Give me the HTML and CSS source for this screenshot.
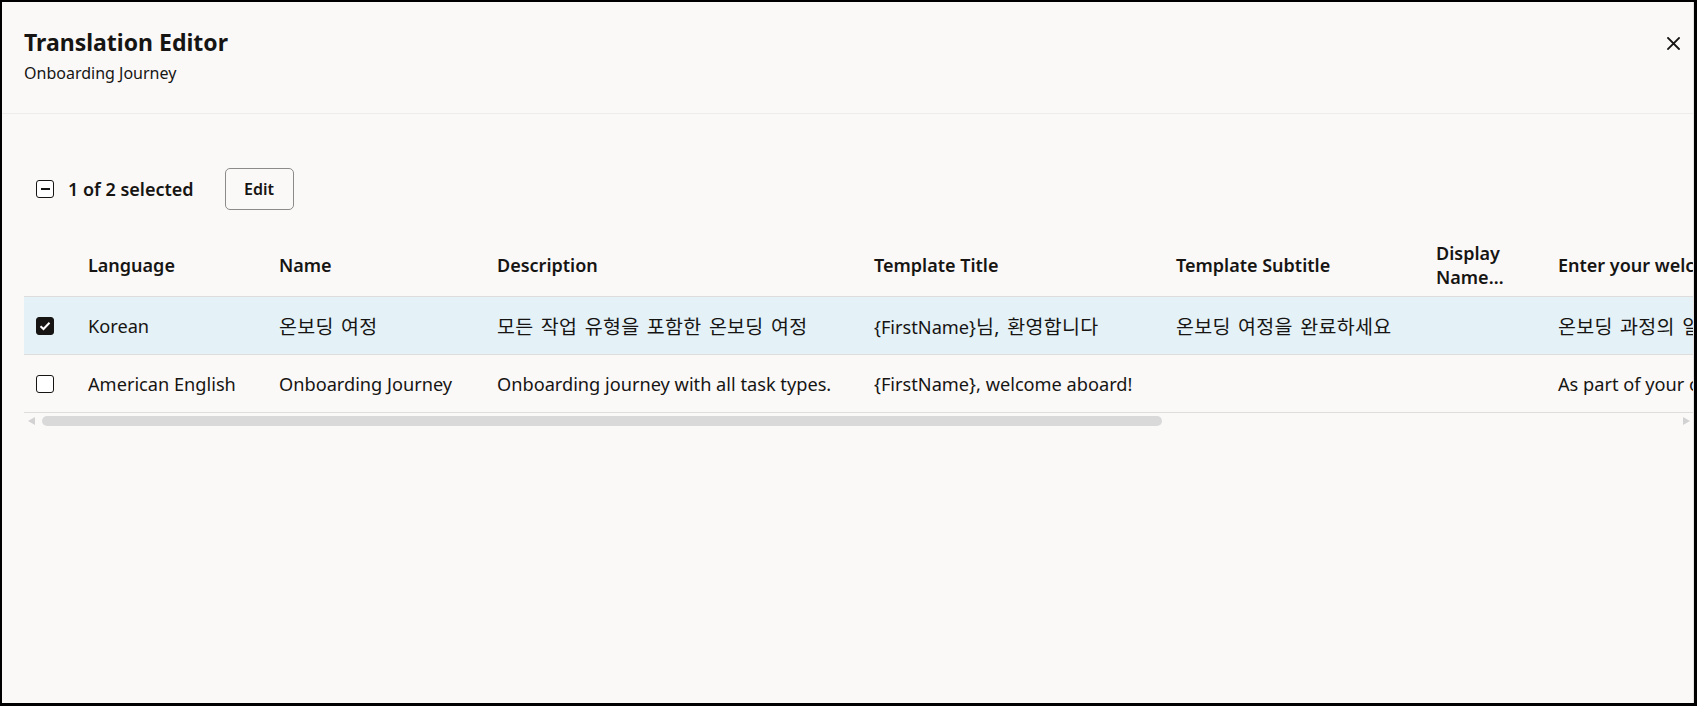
FILE: index.html
```html
<!DOCTYPE html>
<html lang="en">
<head>
  <meta charset="UTF-8">
  <meta name="viewport" content="width=device-width, initial-scale=1.0">
  <title>Translation Editor</title>
  <link rel="stylesheet" href="styles.css">
</head>
<body>
  <div class="frame">
    <div class="dialog">
      <div class="dialog-header">
        <div>
          <h1 class="dialog-title">Translation Editor</h1>
          <div class="dialog-subtitle">Onboarding Journey</div>
        </div>
        <button class="close-btn" aria-label="Close">
          <svg width="13" height="13" viewBox="0 0 13 13">
            <path d="M1 1 L12 12 M12 1 L1 12" stroke="#161513" stroke-width="1.8" stroke-linecap="square"/>
          </svg>
        </button>
      </div>

      <div class="dialog-body">
        <div class="toolbar">
          <span class="checkbox partial"><span class="dash"></span></span>
          <span class="selected-count">1 of 2 selected</span>
          <button class="btn">Edit</button>
        </div>

        <div class="table-wrap">
          <div class="row head">
            <div class="cell"></div>
            <div class="cell">Language</div>
            <div class="cell">Name</div>
            <div class="cell">Description</div>
            <div class="cell">Template Title</div>
            <div class="cell">Template Subtitle</div>
            <div class="cell"><span class="clamp">Display Name Override</span></div>
            <div class="cell">Enter your welcome message</div>
          </div>
          <div class="row selected">
            <div class="cell check">
              <span class="checkbox checked">
                <svg width="12" height="10" viewBox="0 0 12 10">
                  <path d="M1.5 5.2 L4.5 8 L10.5 1.8" fill="none" stroke="#fff" stroke-width="2"/>
                </svg>
              </span>
            </div>
            <div class="cell">Korean</div>
            <div class="cell ko">온보딩 여정</div>
            <div class="cell ko">모든 작업 유형을 포함한 온보딩 여정</div>
            <div class="cell">{FirstName}<span class="ko">님, 환영합니다</span></div>
            <div class="cell ko">온보딩 여정을 완료하세요</div>
            <div class="cell"></div>
            <div class="cell ko">온보딩 과정의 일환으로 다음 작업을 완료해 주세요.</div>
          </div>
          <div class="row">
            <div class="cell check"><span class="checkbox"></span></div>
            <div class="cell">American English</div>
            <div class="cell">Onboarding Journey</div>
            <div class="cell">Onboarding journey with all task types.</div>
            <div class="cell">{FirstName}, welcome aboard!</div>
            <div class="cell"></div>
            <div class="cell"></div>
            <div class="cell">As part of your onboarding, please complete the following tasks.</div>
          </div>
        </div>

        <div class="hscroll">
          <span class="arrow left"></span>
          <span class="thumb"></span>
          <span class="arrow right"></span>
        </div>
      </div>
    </div>
  </div>
</body>
</html>
```

FILE: styles.css
```css
body {
  margin: 0;
  background: #000;
  font-family: "Noto Sans", "Noto Sans CJK KR", sans-serif;
  color: #161513;
}
.frame {
  height: 706px;
  box-sizing: border-box;
  border-style: solid;
  border-color: #000;
  border-width: 2px 3px 3px 2px;
}
.dialog {
  height: 100%;
  background: #fbf9f8;
  border-right: 1px solid #e4e2e0;
  overflow: hidden;
}

/* header */
.dialog-header {
  display: flex;
  justify-content: space-between;
  align-items: flex-start;
  height: 112px;
  box-sizing: border-box;
  padding: 24px 13px 0 22px;
  border-bottom: 1px solid #eeecea;
}
.dialog-title {
  margin: 0;
  font-size: 23px;
  line-height: 32px;
  font-weight: 700;
}
.dialog-subtitle {
  margin-top: 5px;
  font-size: 16px;
  line-height: 20px;
}
.close-btn {
  margin-top: 11px;
  padding: 0;
  border: 0;
  background: none;
  width: 13px;
  height: 13px;
  display: flex;
}

/* body */
.dialog-body {
  padding: 54px 0 0 22px;
}
.toolbar {
  display: flex;
  align-items: center;
  height: 42px;
  padding-left: 12px;
}
.selected-count {
  margin-left: 14px;
  font-size: 18px;
  font-weight: 600;
}
.btn {
  margin-left: 31px;
  width: 69px;
  height: 42px;
  border: 1px solid #8d8b89;
  border-radius: 5px;
  background: transparent;
  font-family: inherit;
  font-size: 16px;
  font-weight: 600;
  color: #161513;
}

.checkbox {
  width: 18px;
  height: 18px;
  box-sizing: border-box;
  border: 1.5px solid #161513;
  border-radius: 3px;
  background: #fff;
  display: inline-flex;
  align-items: center;
  justify-content: center;
}
.checkbox.checked {
  background: #161513;
}
.checkbox .dash {
  width: 9px;
  height: 2px;
  background: #161513;
}

/* table */
.table-wrap {
  margin-top: 31px;
  overflow: hidden;
}
.row {
  display: grid;
  grid-template-columns: 52px 191px 218px 377px 302px 260px 122px 460px;
  align-items: center;
  height: 58px;
  box-sizing: border-box;
  border-bottom: 1px solid #dfdddb;
  font-size: 18.2px;
  width: 1982px;
}
.row.head {
  height: 56px;
  padding-bottom: 7px;
  font-size: 18px;
  font-weight: 600;
  line-height: 24px;
}
.row.selected {
  background: #e4f1f7;
}
.cell {
  padding: 0 12px;
  white-space: nowrap;
  overflow: hidden;
}
.cell.check {
  display: flex;
}
.clamp {
  white-space: normal;
  display: -webkit-box;
  -webkit-line-clamp: 2;
  -webkit-box-orient: vertical;
  overflow: hidden;
}
.ko {
  font-size: 19.5px;
  letter-spacing: 0.3px;
  word-spacing: 2px;
}

/* fake horizontal scrollbar */
.hscroll {
  display: flex;
  align-items: center;
  height: 14px;
  margin-top: 1px;
  padding: 0 3px 0 4px;
}
.arrow {
  width: 0;
  height: 0;
  border-top: 4px solid transparent;
  border-bottom: 4px solid transparent;
}
.arrow.left {
  border-right: 7px solid #d2d2d2;
}
.arrow.right {
  margin-left: auto;
  border-left: 7px solid #d2d2d2;
}
.thumb {
  margin-left: 7px;
  width: 1120px;
  height: 10px;
  border-radius: 5px;
  background: #d9d9d9;
}
```
